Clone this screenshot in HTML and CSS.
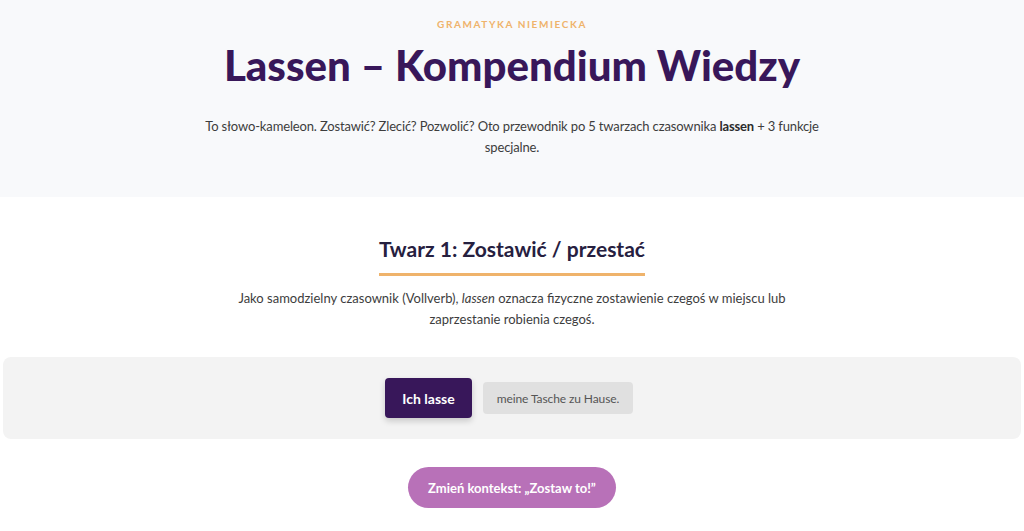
FILE: index.html
```html
<!DOCTYPE html>
<html lang="pl">
<head>
<meta charset="utf-8">
<title>Lassen – Kompendium Wiedzy</title>
<link rel="stylesheet" href="styles.css">
</head>
<body>
<header class="hero">
  <div class="eyebrow">GRAMATYKA NIEMIECKA</div>
  <h1 class="title">Lassen – Kompendium Wiedzy</h1>
  <p class="lead">To słowo-kameleon. Zostawić? Zlecić? Pozwolić? Oto przewodnik po 5 twarzach czasownika <strong>lassen</strong> + 3 funkcje specjalne.</p>
</header>
<main class="section">
  <h2 class="face-title">Twarz 1: Zostawić / przestać</h2>
  <p class="face-desc">Jako samodzielny czasownik (Vollverb), <em>lassen</em> oznacza fizyczne zostawienie czegoś w miejscu lub zaprzestanie robienia czegoś.</p>
  <div class="demo">
    <span class="chip chip-main">Ich lasse</span>
    <span class="chip chip-rest">meine Tasche zu Hause.</span>
  </div>
  <div class="actions">
    <button class="ctx-btn">Zmień kontekst: „Zostaw to!”</button>
  </div>
</main>
</body>
</html>
```
FILE: styles.css
```css
* { box-sizing: border-box; }
body {
  margin: 0;
  font-family: "Lato", "Noto Sans", sans-serif;
  color: #3d3d3d;
  background: #fff;
}
.hero {
  background: #f8f9fb;
  text-align: center;
  padding: 18px 20px 0;
  height: 197px;
}
.eyebrow {
  font-size: 10px;
  font-weight: 700;
  letter-spacing: 1.6px;
  color: #efb36b;
  line-height: 12px;
}
.title {
  margin: 11px 0 0;
  font-size: 42px;
  line-height: 48px;
  font-weight: 900;
  color: #38175a;
  letter-spacing: 0;
}
.lead {
  margin: 27px auto 0;
  max-width: 630px;
  font-size: 13px;
  line-height: 21px;
  letter-spacing: -0.15px;
  color: #3d3d3d;
}
.lead strong { color: #2b2b2b; }
.section {
  padding: 38px 3px 0;
  text-align: center;
}
.face-title {
  display: inline-block;
  margin: 0;
  padding: 0 0 10px;
  font-size: 21px;
  line-height: 28px;
  font-weight: 700;
  color: #26203f;
  border-bottom: 3px solid #efb36b;
}
.face-desc {
  margin: 12px auto 0;
  max-width: 560px;
  font-size: 13px;
  line-height: 21px;
  color: #3d3d3d;
}
.demo {
  margin-top: 27px;
  height: 82px;
  padding-right: 6px;
  background: #f3f3f3;
  border-radius: 8px;
  display: flex;
  align-items: center;
  justify-content: center;
  gap: 11px;
}
.chip {
  display: inline-flex;
  align-items: center;
  justify-content: center;
  border-radius: 4px;
}
.chip-main {
  width: 87px;
  height: 40px;
  background: #38175a;
  color: #fff;
  font-size: 14px;
  font-weight: 700;
  box-shadow: 0 3px 6px rgba(0,0,0,0.18);
}
.chip-rest {
  width: 150px;
  height: 32px;
  background: #e0e0e0;
  color: #555;
  font-size: 12px;
  letter-spacing: -0.1px;
}
.actions {
  margin-top: 28px;
  display: flex;
  justify-content: center;
}
.ctx-btn {
  width: 208px;
  height: 41px;
  border: 0;
  border-radius: 21px;
  background: #b871b8;
  color: #fff;
  font-family: inherit;
  font-size: 13px;
  font-weight: 700;
}
```
